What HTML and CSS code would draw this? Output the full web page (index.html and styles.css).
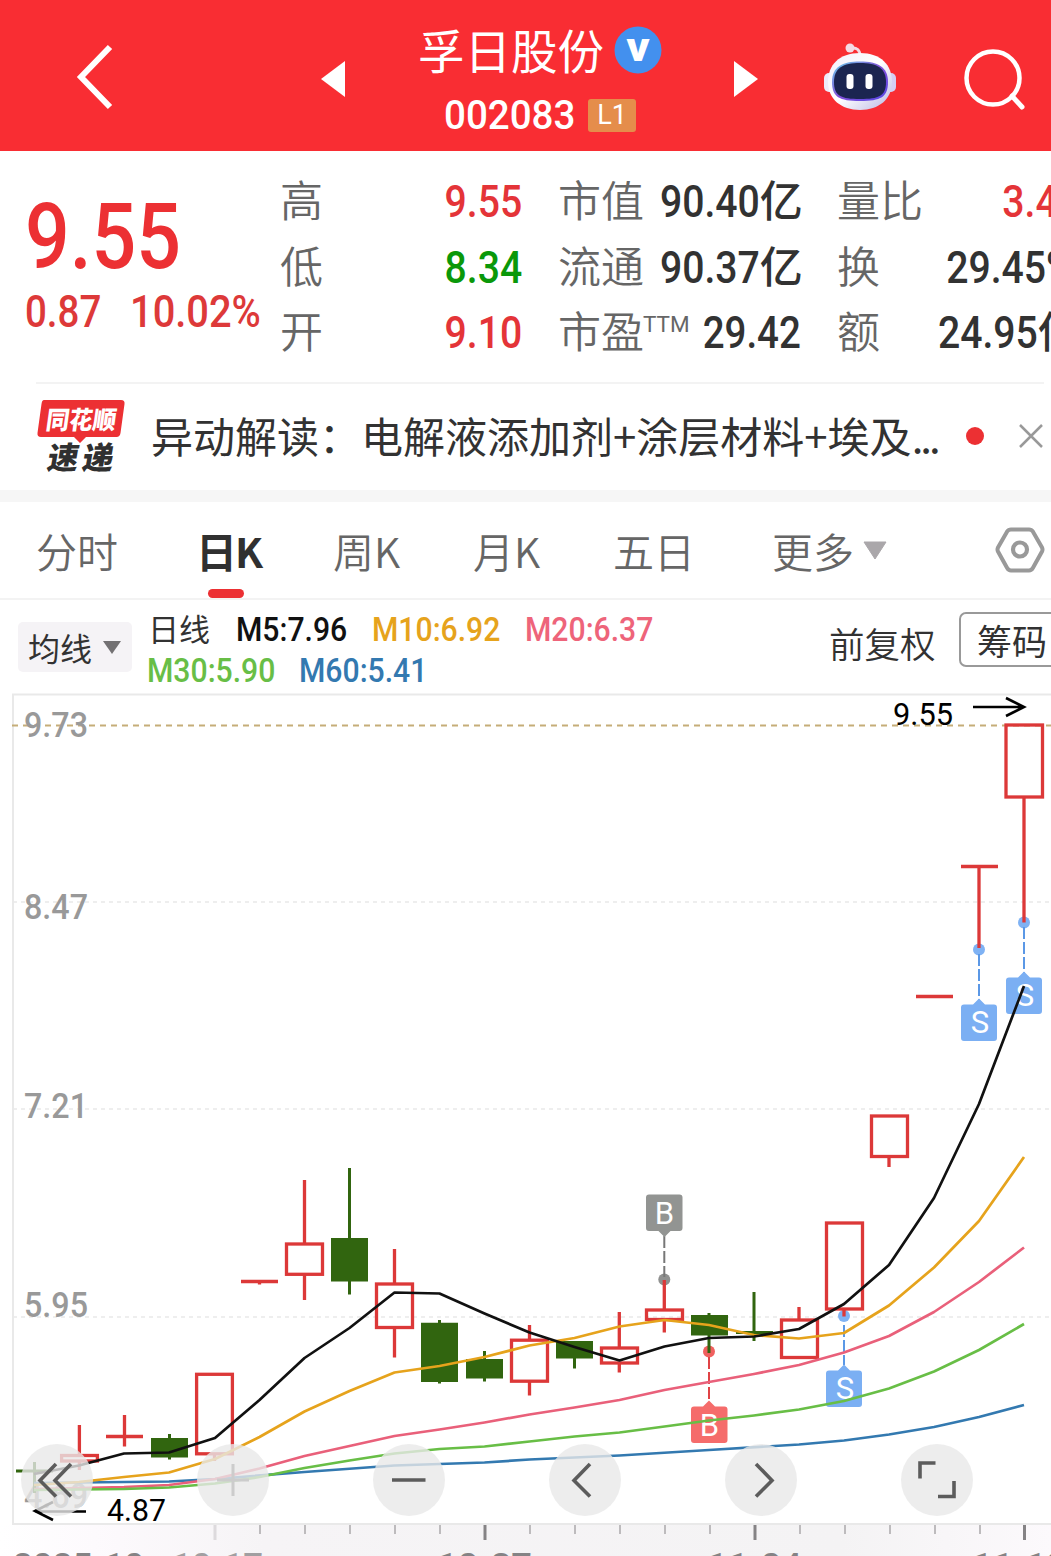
FILE: index.html
```html
<!DOCTYPE html>
<html lang="zh-CN">
<head>
<meta charset="utf-8">
<title>孚日股份 002083</title>
<link rel="stylesheet" href="styles.css">
</head>
<body>
<header class="header">
  <svg class="back" width="40" height="68" viewBox="0 0 40 68"><path d="M34 4 5 34 34 64" fill="none" stroke="#fff" stroke-width="6"/></svg>
  <svg class="prev" width="24" height="36" viewBox="0 0 24 36"><path d="M24 0v36L0 18z" fill="#fff"/></svg>
  <div class="stock">
    <div class="stock-name"><span>孚日股份</span><svg width="48" height="48" viewBox="0 0 48 48"><circle cx="24" cy="24" r="23.500" fill="#4390ee"/><text x="24" y="34.500" class="verified" textLength="23" lengthAdjust="spacingAndGlyphs">v</text></svg></div>
    <div class="stock-code"><span class="code"><span class="num">002083</span></span><span class="level">L1</span></div>
  </div>
  <svg class="next" width="24" height="36" viewBox="0 0 24 36"><path d="M0 0v36L24 18z" fill="#fff"/></svg>
  <svg class="robot" width="74" height="70" viewBox="0 0 74 70">
    <defs>
      <linearGradient id="shell" x1="0" y1="0" x2="1" y2="1"><stop offset="0" stop-color="#f3effb"/><stop offset=".5" stop-color="#fff"/><stop offset="1" stop-color="#b9b6e4"/></linearGradient>
      <linearGradient id="visor" x1="0" y1="0" x2="1" y2="1"><stop offset="0" stop-color="#68cfea"/><stop offset=".5" stop-color="#8250d8"/><stop offset="1" stop-color="#5545e5"/></linearGradient>
    </defs>
    <path d="M28 6q9-1 9 8" fill="none" stroke="#f4dbe6" stroke-width="3"/><circle cx="27" cy="6" r="4.500" fill="#f4dbe6"/>
    <rect x="1" y="31" width="12" height="19" rx="5" fill="#eeeafa"/><rect x="61" y="31" width="12" height="19" rx="5" fill="#d5cef4"/>
    <path d="M37 11C58 11 69 23 69 40S56 68 37 68 5 57 5 40 16 11 37 11z" fill="url(#shell)"/>
    <path d="M37 19.500C55 19.500 65 25 65 40S58 59 37 59 9 55 9 40 19 19.500 37 19.500z" fill="url(#visor)"/><path d="M37 21C54 21 63 26 63 40S56 57 37 57 11 54 11 40 20 21 37 21z" fill="#1b2550"/>
    <rect x="23.500" y="32" width="7" height="15" rx="3" fill="#fff"/><rect x="42.500" y="32" width="7" height="15" rx="3" fill="#fff"/>
  </svg>
  <svg class="search" width="62" height="62" viewBox="0 0 62 62"><circle cx="29" cy="30" r="26.500" fill="none" stroke="#fff" stroke-width="4.500"/><path d="m48 48 10 11" stroke="#fff" stroke-width="5" stroke-linecap="round"/></svg>
</header>

<section class="quote">
  <div class="price">
    <div class="last"><span class="num">9.55</span></div>
    <div class="change"><span class="num delta">0.87</span><span class="num pct">10.02%</span></div>
  </div>
  <dl class="stats ohlc">
    <dt>高</dt><dd class="up"><span class="num">9.55</span></dd>
    <dt>低</dt><dd class="down"><span class="num">8.34</span></dd>
    <dt>开</dt><dd class="up"><span class="num">9.10</span></dd>
  </dl>
  <dl class="stats cap">
    <dt>市值</dt><dd class="unit"><span class="num">90.40</span>亿</dd>
    <dt>流通</dt><dd class="unit"><span class="num">90.37</span>亿</dd>
    <dt>市盈<sup>TTM</sup></dt><dd class="pe"><span class="num">29.42</span></dd>
  </dl>
  <dl class="stats flow">
    <dt>量比</dt><dd class="up partial"><span class="num">3.4</span></dd>
    <dt>换</dt><dd class="turnover"><span class="num">29.45%</span></dd>
    <dt>额</dt><dd class="unit"><span class="num">24.95</span>亿</dd>
  </dl>
</section>

<section class="news">
  <svg class="news-logo" width="90" height="76" viewBox="0 0 90 76">
    <path d="M8 1h77q4 0 3.500 4l-4 29q-.6 4-4 4H50l-6 6-6-6H5q-4 0-3.500-4l4-29Q6 1 8 1z" fill="#ec3033"/>
    <text class="logo-top" transform="translate(9 30) skewX(-8)" textLength="70" lengthAdjust="spacingAndGlyphs">同花顺</text>
    <text class="logo-bottom" transform="translate(10 70) skewX(-10)"><tspan x="0">速</tspan><tspan x="35">递</tspan></text>
  </svg>
  <p>异动解读：电解液添加剂+涂层材料+埃及<span class="ellipsis">...</span></p>
  <i class="unread"></i>
  <svg class="close" width="24" height="24" viewBox="0 0 24 24"><path d="m1 1 22 22M23 1 1 23" stroke="#999" stroke-width="2.500"/></svg>
</section>

<nav class="tabs">
  <span>分时</span><span class="active">日K</span><span>周K</span><span>月K</span><span>五日</span><span class="more">更多<svg width="24" height="19" viewBox="0 0 24 19"><path d="M1 1h22L12 18z" fill="#aaa7aa" stroke="#aaa7aa" stroke-linejoin="round"/></svg></span>
  <svg class="gear" width="50" height="48" viewBox="0 0 50 48"><path d="M16 3.500h18q2.500 0 4 2.200L47 21.500q1 2 0 4L38 41.800q-1.500 2.700-4 2.700H16q-2.500 0-4-2.700L3 25.500q-1-2 0-4L12 5.700q1.500-2.200 4-2.200z" fill="none" stroke="#999" stroke-width="4"/><circle cx="25" cy="23.500" r="7" fill="none" stroke="#999" stroke-width="4.200"/></svg>
</nav>

<section class="indicators">
  <div class="ma-select">均线<svg width="18" height="14" viewBox="0 0 18 14"><path d="M0 1h18L9 14z" fill="#737173"/></svg></div>
  <div class="legend">
    <div class="legend-row"><span class="period">日线</span><span class="ma m5"><b>M5:7.96</b></span><span class="ma m10"><b>M10:6.92</b></span><span class="ma m20"><b>M20:6.37</b></span></div>
    <div class="legend-row"><span class="ma m30"><b>M30:5.90</b></span><span class="ma m60"><b>M60:5.41</b></span></div>
  </div>
  <span class="adjust">前复权</span>
  <span class="chips">筹码</span>
</section>

<svg class="chart" width="1051" height="866" viewBox="0 690 1051 866">
  <defs><linearGradient id="band"><stop offset="0" stop-color="#fff"/><stop offset=".09" stop-color="#fdfafd"/><stop offset=".25" stop-color="#f6f4f6"/><stop offset=".8" stop-color="#f4f3f4"/><stop offset="1" stop-color="#fcf9fc"/></linearGradient></defs>
  <rect y="1525" width="1051" height="31" fill="url(#band)"/>
  <path d="M1051 694.500H13V1524h1038" fill="none" stroke="#e9e9e9" stroke-width="2"/>
  <path d="M13 902h1038M13 1109h1038M13 1317h1038" stroke="#e9e9e9" stroke-width="1.500" stroke-dasharray="4 4"/>
  <path d="M12 725.500h1039" stroke="#c5ad78" stroke-width="2" stroke-dasharray="6 5"/>
  <g class="scale">
    <text x="24" y="736.500" textLength="64" lengthAdjust="spacingAndGlyphs">9.73</text>
    <text x="24" y="919" textLength="64" lengthAdjust="spacingAndGlyphs">8.47</text>
    <text x="24" y="1118" textLength="64" lengthAdjust="spacingAndGlyphs">7.21</text>
    <text x="24" y="1317" textLength="64" lengthAdjust="spacingAndGlyphs">5.95</text>
    <text x="24" y="1508" textLength="64" lengthAdjust="spacingAndGlyphs">4.69</text>
  </g>
  <g class="ticks">
    <path d="M260 1525v9M305 1525v9M350 1525v9M395 1525v9M440 1525v9M530 1525v9M575 1525v9M620 1525v9M665 1525v9M710 1525v9M800 1525v9M845 1525v9M890 1525v9M935 1525v9M980 1525v9" stroke="#bdbbbd" stroke-width="2"/>
    <path d="M215 1525v15" stroke="#dddadd" stroke-width="3"/>
    <path d="M485 1525v15M755 1525v15M1024.500 1525v15" stroke="#858385" stroke-width="3"/>
  </g>
  <g class="dates">
    <text x="13" y="1577" textLength="131" lengthAdjust="spacingAndGlyphs">2025-10</text>
    <text x="172" y="1577" textLength="91" lengthAdjust="spacingAndGlyphs" opacity=".75">10-17</text>
    <text x="437" y="1577" textLength="95" lengthAdjust="spacingAndGlyphs">10-27</text>
    <text x="707" y="1577" textLength="95" lengthAdjust="spacingAndGlyphs">11-04</text>
    <text x="972" y="1577" textLength="95" lengthAdjust="spacingAndGlyphs">11-12</text>
  </g>
  <g fill="#7fb2f4"><circle cx="979" cy="949.500" r="6"/><circle cx="1024" cy="922.500" r="6"/><circle cx="844" cy="1316" r="6"/></g>
  <circle cx="664.300" cy="1279.500" r="6" fill="#8f908f"/><circle cx="709" cy="1351.500" r="6" fill="#f0605f"/>
  <g class="red">
    <path d="M79.400 1425v29M79.400 1462v8M106 1436.500h37M124.500 1415v31.500M214.500 1455v6M241 1281.500h37M259.500 1281v3.500M304.500 1180v63M304.500 1275v25M394.500 1249v34M394.500 1328v29.500M529.500 1325v14M529.500 1382v13.500M619.300 1312v35M619.300 1364v8.500M664.300 1280v29M664.300 1321v11.500M799 1307v12M844 1310v6.500M889 1157v10M916 996.500h37M961 866.500h37M979 866v82M1024 798v124.500"/>
    <rect x="61.600" y="1455.500" width="35.800" height="5.500"/><rect x="196.600" y="1374.300" width="35.800" height="79.500"/><rect x="286.500" y="1244" width="36" height="30.300"/><rect x="376.500" y="1284" width="36" height="43.500"/><rect x="511.500" y="1340.200" width="36" height="41"/><rect x="601.500" y="1348" width="36" height="15"/><rect x="646.500" y="1310" width="36" height="9.500"/><rect x="781.500" y="1320" width="36" height="37.500"/><rect x="826.500" y="1223" width="36" height="86"/><rect x="871.500" y="1116" width="36" height="40.500"/><rect x="1006" y="725" width="36.500" height="72"/>
  </g>
  <g fill="#31650f">
    <path d="M16 1469.500h37v3H16zM33 1462h3v31h-3zM151 1438h37v19.500h-37zM168 1434h3v25.500h-3zM331 1238h37v43.500h-37zM348 1168h3v126.500h-3zM421 1322.700h37v59.300h-37zM438 1320h3v63.500h-3zM466 1359h37v19.500h-37zM483 1351h3v30.500h-3zM556 1341h37v17.500h-37zM573 1341h3v27.500h-3zM691 1315h37v20.500h-37zM707.500 1313h3v40h-3zM736 1331h37v3h-37zM752.500 1292h3v49h-3z"/>
  </g>
  <g class="leaders"><path d="M979 954v46M1024 927v46M844 1325v40" stroke="#5b98e6"/><path d="M664.300 1236v41" stroke="#777"/><path d="M709 1357v46" stroke="#e04345"/></g>
  <g class="marks">
    <path d="M973 1004.500l6-6 6 6h9q3 0 3 3v30.500q0 3-3 3h-30q-3 0-3-3v-30.500q0-3 3-3zM1018 977.500l6-6 6 6h9q3 0 3 3v30.500q0 3-3 3h-30q-3 0-3-3v-30.500q0-3 3-3zM838 1370.500l6-6 6 6h9q3 0 3 3v30.500q0 3-3 3h-30q-3 0-3-3v-30.500q0-3 3-3z" fill="#7baff3"/>
    <path d="M649 1194.500h30.500q3 0 3 3v30.500q0 3-3 3h-9l-6 6-6-6H649q-3 0-3-3v-30.500q0-3 3-3z" fill="#929492"/>
    <path d="M703 1406.500l6-6 6 6h9.500q3 0 3 3v30.500q0 3-3 3H694q-3 0-3-3v-30.500q0-3 3-3z" fill="#f56c6b"/>
    <text x="980" y="1033">S</text><text x="1025" y="1006">S</text><text x="845" y="1399">S</text><text x="664.500" y="1223.500">B</text><text x="709.500" y="1435.500">B</text>
  </g>
  <g class="averages">
    <polyline stroke="#3379b0" points="34,1483 79,1482.500 169,1481.500 215,1479 304.500,1472 394.500,1465.500 484.500,1462.500 529.500,1459.500 619.500,1455.500 709,1450 799,1444.500 844,1440.500 889,1434.500 934,1427 979,1417 1024,1405"/>
    <polyline stroke="#e9607a" points="34,1489 79,1488 124,1487 169,1485 215,1479 259.500,1468.500 304.500,1456 349.500,1446 394.500,1436 439.500,1429.500 484.500,1422.500 529.500,1414.500 574.500,1407.500 619.500,1400 664.500,1390 709,1382 754,1374 799,1365 844,1352.500 889,1336 934,1312 979,1282 1024,1247.500"/>
    <polyline stroke="#68be46" points="34,1490 79,1489.500 124,1489 169,1487.500 215,1483.500 259.500,1477 304.500,1468 349.500,1460.500 394.500,1453.500 439.500,1449 484.500,1446.500 529.500,1441.500 574.500,1436.500 619.500,1432.500 664.500,1426.500 709,1420.500 754,1415.500 799,1409.500 844,1401 889,1388.500 934,1371.500 979,1350 1024,1324"/>
    <polyline stroke="#e6a31c" points="34,1485 79,1482 124,1477 169,1472.500 215,1459 259.500,1437 304.500,1411.500 349.500,1391 394.500,1372.500 439.500,1366 484.500,1357 529.500,1345.500 574.500,1338 619.500,1326.500 664.500,1320 709,1325 754,1335 799,1338.500 844,1333 889,1305.500 934,1267.500 979,1221 1024,1157"/>
    <polyline stroke="#111" points="34,1474 79,1465.500 124,1453.500 169,1452.500 215,1438 259.500,1400 304.500,1358 349.500,1328 394.500,1292.500 439.500,1293.500 484.500,1313.500 529.500,1332.500 574.500,1347 619.500,1360.500 664.500,1346.500 709,1338 754,1336.500 799,1329 844,1304 889,1265 934,1198 979,1104 1024,986"/>
  </g>
  <g class="extremes">
    <text x="893" y="724.500" textLength="60" lengthAdjust="spacingAndGlyphs">9.55</text><path d="M973 707h51M1006 698l18 9-18 9"/>
    <text x="107" y="1520.500" textLength="59" lengthAdjust="spacingAndGlyphs">4.87</text><path d="M86 1511.500H35M53 1502l-18 9 18 9"/>
  </g>
  <g fill="#e9e9e9" fill-opacity=".8"><circle cx="57" cy="1480" r="36"/><circle cx="233" cy="1480" r="36"/><circle cx="409" cy="1480" r="36"/><circle cx="585" cy="1480" r="36"/><circle cx="761" cy="1480" r="36"/><circle cx="937" cy="1480" r="36"/></g>
  <path class="plus" d="M217 1480h32M233 1464v32"/>
  <path class="icons" d="M56 1464l-16 16.500 16 16M71 1464l-16 16.500 16 16M392 1480h33.500M590 1464l-16 16.500 16 16M756 1464l16 16.500-16 16M920 1478.500v-15.500h15.500M954 1481v15.500h-16"/>
</svg>
</body>
</html>
```
FILE: styles.css
```css
* { box-sizing: border-box; }
body { margin: 0; width: 1051px; height: 1556px; overflow: hidden; background: #fff; color: #323232; font-family: "Noto Sans CJK SC", sans-serif; }
svg { display: block; flex: none; }
.num { display: inline-block; font-family: Roboto, sans-serif; font-weight: 500; transform: scaleX(.87); transform-origin: left; }

.header { height: 151px; background: #f92d33; display: flex; align-items: flex-start; color: #fff; }
.back { margin: 43px 0 0 76px; }
.prev { margin: 61px 0 0 205px; }
.stock { width: 254px; height: 151px; margin: 0 77px 0 58px; padding: 15px 0 0 15px; }
.stock-name { display: flex; align-items: center; gap: 10px; height: 70px; font-size: 46.500px; line-height: 70px; white-space: nowrap; }
.stock-name span { margin-top: -2px; }
.verified { font: 800 38px "Open Sans", sans-serif; fill: #fff; text-anchor: middle; }
.stock-code { display: flex; align-items: center; height: 60px; margin-top: 1px; padding-left: 26px; }
.code { width: 144px; margin-top: -6px; font-size: 41px; line-height: 60px; }
.code .num { transform: scaleX(.94); }
.level { width: 48px; height: 33px; margin-top: -1px; border-radius: 3px; background: #e58d4b; font: 27px/33px Roboto, sans-serif; text-align: center; }
.next { margin-top: 61px; }
.robot { margin: 42px 0 0 65px; }
.search { margin: 48px 0 0 67px; }

.quote { display: flex; height: 231px; padding-top: 15px; }
.price { width: 280px; padding-left: 25px; color: #ec3033; flex: none; }
.last { height: 117px; font-size: 91px; line-height: 125px; }
.last .num { transform: scaleX(.865); }
.change { display: flex; font-size: 45px; line-height: 57px; color: #dd3939; }
.delta { width: 106px; }
.change .pct { transform: scaleX(.885); }
.change .delta { transform: scaleX(.855); margin-right: -1px; }
.stats { display: grid; grid-auto-rows: 65.500px; margin: 0; font-size: 43px; line-height: 65.500px; white-space: nowrap; flex: none; }
.stats dt { color: #666; font-weight: 350; }
.stats dd { margin: 0; text-align: right; font-weight: 500; }
.stats .num { font-size: 45px; transform-origin: right; }
.stats sup { font: 22.500px/1 Roboto, sans-serif; vertical-align: 16px; margin-left: -1px; }
.ohlc { width: 243px; grid-template-columns: 43px 199px; }
.cap { width: 242px; margin-left: 35px; grid-template-columns: 87px 156px; }
.flow { width: 243px; margin-left: 37px; grid-template-columns: 86px 157px; }
.stats .up { color: #e43438; }
.stats .down { color: #0a980a; }
.stats .unit { padding-right: 3px; }
.cap .pe .num { transform: scaleX(.855); }
.stats .partial { padding-right: 22px; }
.stats .turnover { padding-right: 5px; }

.news { position: relative; display: flex; height: 120px; align-items: center; border-bottom: 12px solid #f6f6f6; padding-left: 36px; }
.news::before { content: ""; position: absolute; left: 36px; right: 7px; top: 0; height: 2px; background: #f3f3f3; }
.news-logo { margin-top: 1px; }
.news p { width: 812px; margin: -2px 0 0 25px; font-size: 42px; line-height: 60px; white-space: nowrap; }
.ellipsis { letter-spacing: -3px; }
.logo-top { font: 900 25px "Noto Sans CJK SC", sans-serif; fill: #fff; }
.logo-bottom { font: 900 31px "Noto Sans CJK SC", sans-serif; fill: #303030; }
.unread { width: 18px; height: 18px; border-radius: 50%; background: #ec3033; margin-left: 3px; flex: none; }
.close { margin-left: 35px; }

.tabs { display: grid; grid-template-columns: 160px 137px 140px 140px 159px 223px 50px; height: 98px; padding-left: 36px; align-items: center; border-bottom: 2px solid #f3f3f3; font-size: 41px; line-height: 96px; color: #666; font-weight: 350; }
.tabs span { position: relative; white-space: nowrap; }
.tabs .active { color: #303030; font-weight: 700; letter-spacing: -2px; }
.active::after { content: ""; position: absolute; left: 12px; bottom: 0; width: 36px; height: 9px; border-radius: 5px; background: #ec3033; }
.more { display: flex; align-items: center; gap: 9px; }

.indicators { display: flex; height: 90px; align-items: flex-start; padding-left: 18px; }
.ma-select { display: flex; align-items: center; gap: 11px; width: 114px; height: 50px; margin-top: 22px; padding-left: 10px; border-radius: 5px; background: #f5f3f6; font-size: 32px; white-space: nowrap; flex: none; }
.legend { width: 697px; padding: 9px 0 0 16px; flex: none; }
.legend-row { display: flex; height: 41px; line-height: 37px; white-space: nowrap; }
.period { width: 88px; font-size: 31px; flex: none; }
.ma { font: 33.500px/41px Roboto, sans-serif; flex: none; }
.ma b { display: inline-block; font-weight: 500; transform: scaleX(.9); transform-origin: left; }
.m5 { width: 136px; color: #111; }
.m10 { width: 153px; color: #e6a31c; }
.m20 { color: #ee647a; }
.m30 { width: 152px; margin-left: -1px; color: #68be46; }
.m60 { color: #3379b0; }
.adjust { width: 130px; margin-top: 18px; font-size: 35.500px; line-height: 50px; font-weight: 350; white-space: nowrap; flex: none; }
.chips { width: 120px; height: 55px; margin-top: 12px; padding-left: 16px; border: 2px solid #999; border-radius: 7px; font-size: 35px; line-height: 52px; white-space: nowrap; flex: none; }

.scale text { font: 500 35px Roboto, sans-serif; fill: #999; }
.dates text { font: 500 34px Roboto, sans-serif; fill: #858385; }
.red { fill: none; stroke: #dc3838; stroke-width: 3.300; }
.leaders { stroke-width: 2; stroke-dasharray: 12 3; }
.marks text { font: 31px Roboto, sans-serif; fill: #fff; text-anchor: middle; }
.averages { fill: none; stroke-width: 2.700; stroke-linejoin: round; }
.extremes text { font: 31px Roboto, sans-serif; fill: #000; }
.extremes path { fill: none; stroke: #000; stroke-width: 2.600; }
.plus { fill: none; stroke: #ccc; stroke-width: 3; }
.icons { fill: none; stroke: #5c5c5c; stroke-width: 3.600; }
```
